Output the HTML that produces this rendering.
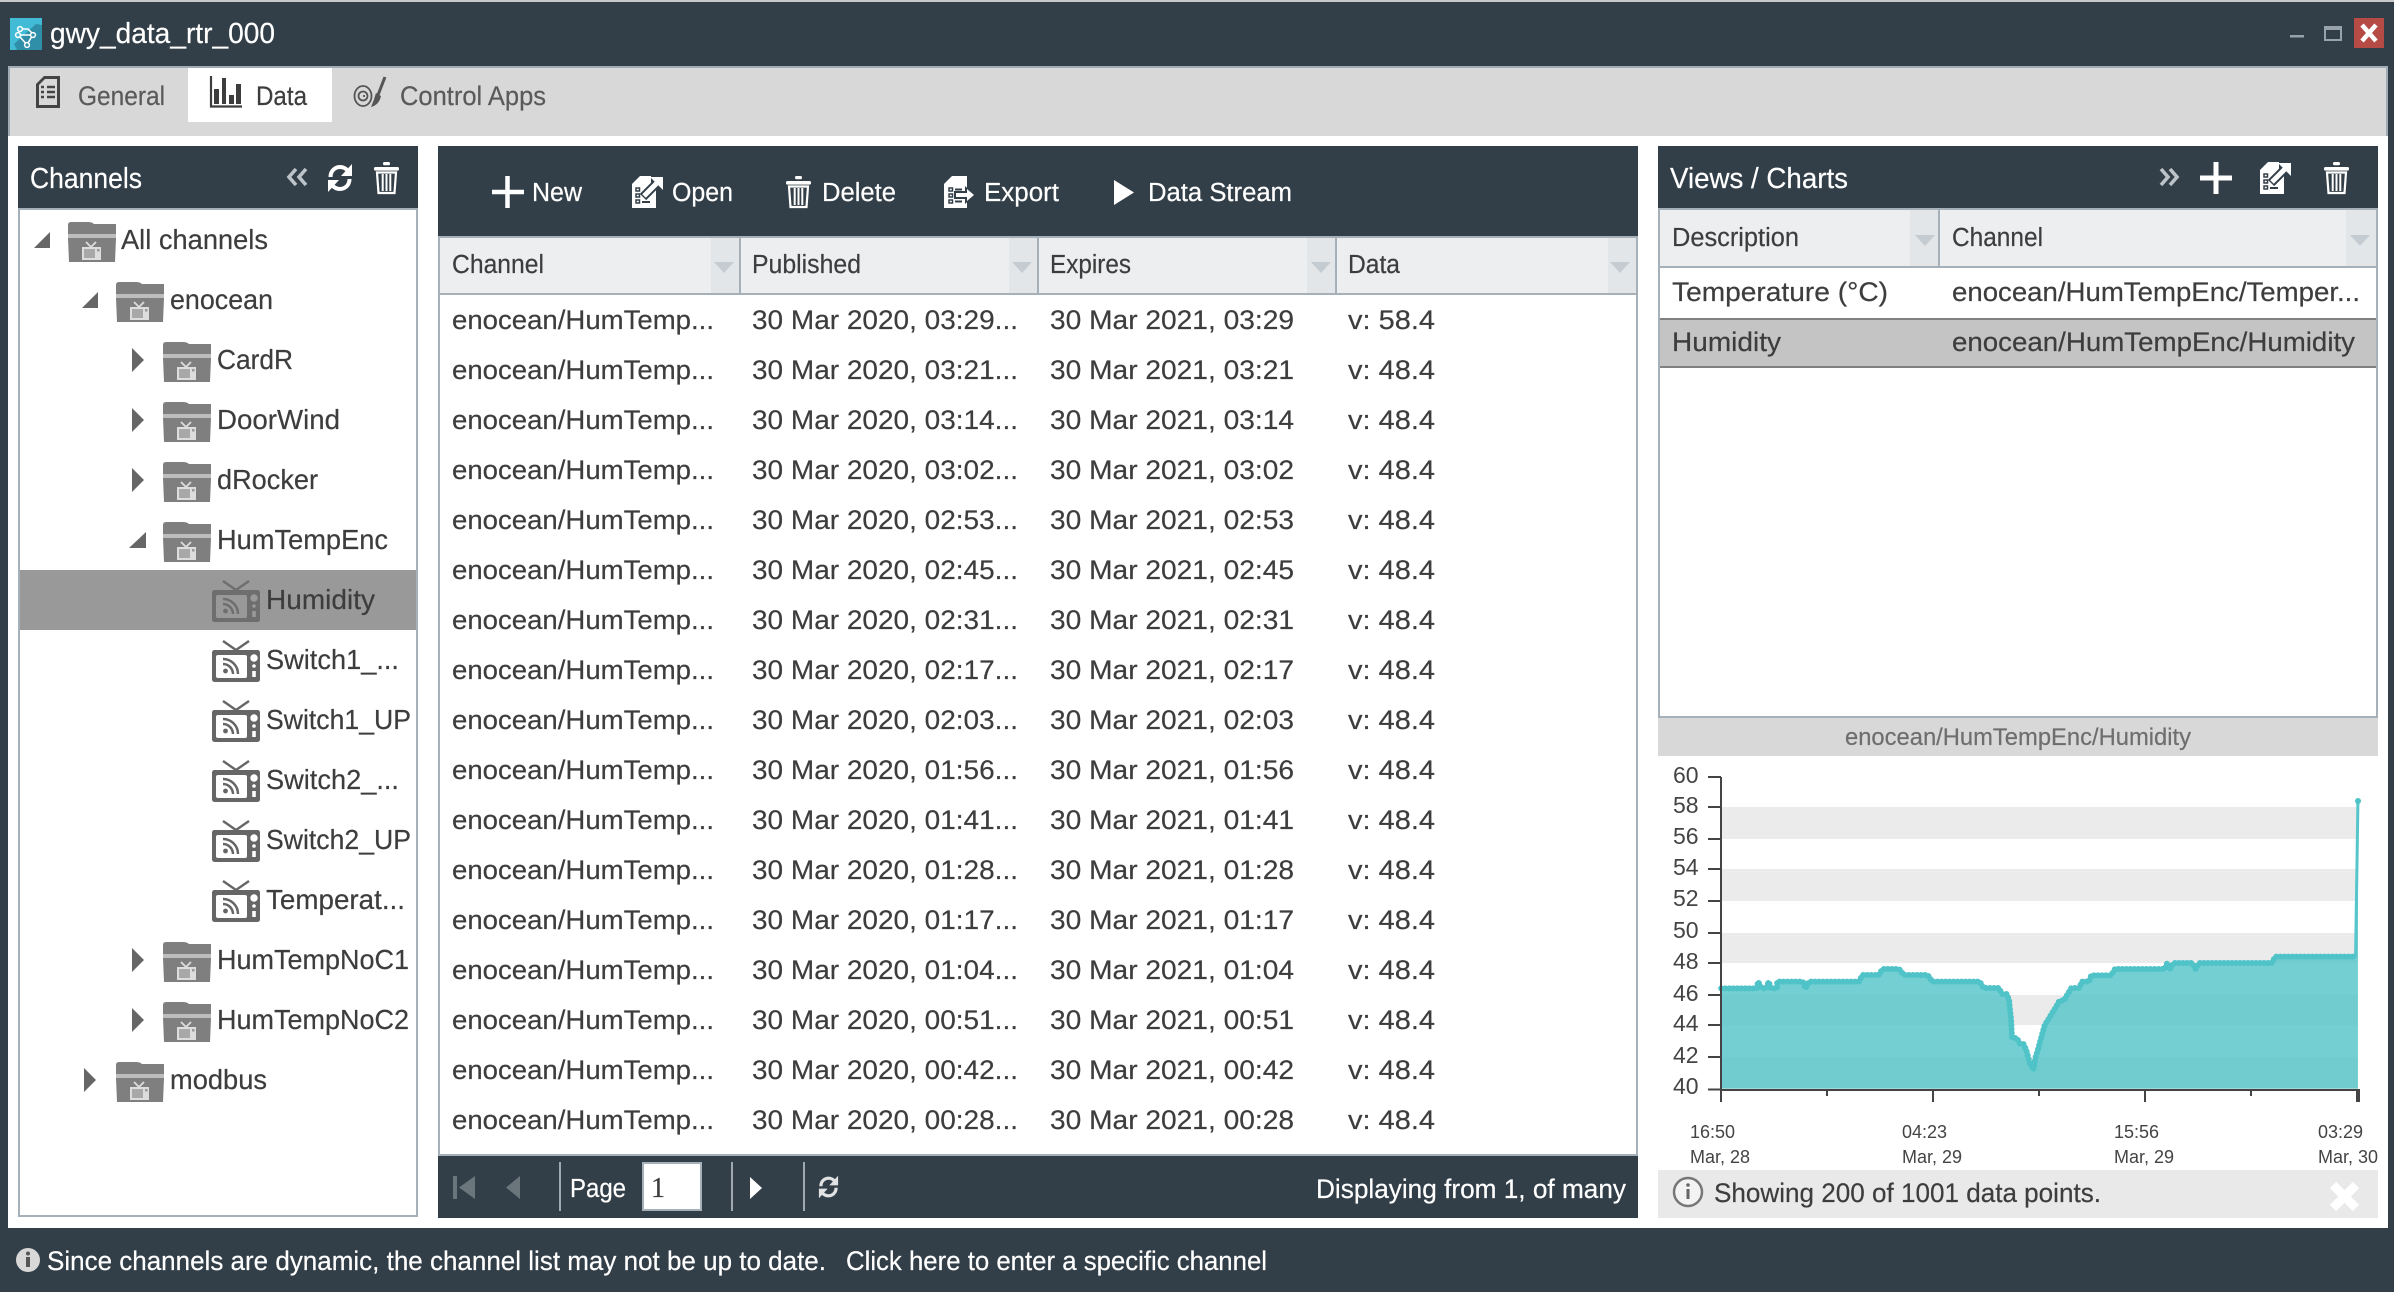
<!DOCTYPE html>
<html lang="en">
<head>
<meta charset="utf-8">
<title>gwy_data_rtr_000</title>
<style>
html,body{margin:0;padding:0;background:#333f48;width:2394px;height:1292px;overflow:hidden}
svg{display:block}
text{font-family:"Liberation Sans",Arial,sans-serif;fill:#3d3d3d;stroke:#3d3d3d;stroke-width:.2px;white-space:pre}
.w{fill:#fff;stroke:#fff}
.r{font-size:26.5px}
.h{font-size:25.5px}
.t{font-size:27.5px}
.hd{font-size:28.5px;fill:#fff;stroke:#fff}
.b{font-size:25.5px;fill:#fff;stroke:#fff}
.tab{font-size:26.5px;fill:#5a5a5a;stroke:#5a5a5a}
.ya{font-size:23px;fill:#444;stroke:none}
.xa{font-size:18px;fill:#444;stroke:none}
.ct{fill:#6e6e6e;stroke:#6e6e6e}
</style>
</head>
<body>
<svg xmlns="http://www.w3.org/2000/svg" width="2394" height="1292" viewBox="0 0 2394 1292">
<defs>
<symbol id="tv" viewBox="0 0 48 42" overflow="visible">
<path d="M11 1 L24 10 L37 1" fill="none" stroke="#666" stroke-width="2.4"/>
<rect x="0" y="10" width="48" height="32" rx="2.5" fill="#666"/>
<rect x="4" y="15" width="31" height="23" rx="2" fill="#fff"/>
<circle cx="42" cy="18" r="3.7" fill="#fff"/><circle cx="42" cy="26" r="1.8" fill="#fff"/>
<rect x="40.2" y="31" width="3.6" height="6" fill="#fff"/>
<circle cx="13.5" cy="31" r="2.4" fill="#666"/>
<path d="M11 24 A10 10 0 0 1 21 34 M11 19 A15 15 0 0 1 26 34" fill="none" stroke="#666" stroke-width="2.5"/>
</symbol>
<symbol id="tvs" viewBox="0 0 48 42" overflow="visible">
<path d="M11 1 L24 10 L37 1" fill="none" stroke="#6e6e6e" stroke-width="2.4"/>
<rect x="0" y="10" width="48" height="32" rx="2.5" fill="#6e6e6e"/>
<rect x="4" y="15" width="31" height="23" rx="2" fill="#999"/>
<circle cx="42" cy="18" r="3.7" fill="#999"/><circle cx="42" cy="26" r="1.8" fill="#999"/>
<rect x="40.2" y="31" width="3.6" height="6" fill="#999"/>
<circle cx="13.5" cy="31" r="2.4" fill="#6e6e6e"/>
<path d="M11 24 A10 10 0 0 1 21 34 M11 19 A15 15 0 0 1 26 34" fill="none" stroke="#6e6e6e" stroke-width="2.5"/>
</symbol>
<symbol id="fold" viewBox="0 0 48 40" overflow="visible">
<path d="M0 12 V3 Q0 0 3 0 H20 Q24 0 26 2 H48 V12 Z" fill="#7f7f7f"/>
<path d="M0 12 H48 V16 H0 Z" fill="#bdbdbd"/>
<path d="M0 16 H48 L47 40 H1 Z" fill="#7f7f7f"/>
<path d="M18 20 L23 25 L28 20" fill="none" stroke="#ddd" stroke-width="1.800"/>
<rect x="14" y="25" width="19" height="13" fill="#ddd"/>
<rect x="16" y="27" width="11" height="9" fill="#a8a8a8"/>
<rect x="29" y="27" width="2.500" height="2.500" fill="#999"/>
</symbol>
<symbol id="trash" viewBox="0 0 25 32" overflow="visible">
<rect x="9" y="0" width="7" height="3.200" rx="1.500" fill="#fff"/>
<rect x="0" y="5" width="25" height="3.600" rx="1.500" fill="#fff"/>
<path d="M3 10.500 H22 L20.500 31 H4.500 Z" fill="none" stroke="#fff" stroke-width="2.200"/>
<path d="M8.700 12 V29 M12.500 12 V29 M16.300 12 V29" stroke="#fff" stroke-width="2"/>
</symbol>
<symbol id="ref" viewBox="0 0 24 30" overflow="visible">
<path d="M2.500 14 C2.500 7 8 4 12 4 C15.500 4 18 5.500 20 8" fill="none" stroke="#fff" stroke-width="4"/>
<path d="M24 1 V13 H13 Z" fill="#fff"/>
<path d="M21.500 16 C21.500 23 16 26 12 26 C8.500 26 6 24.500 4 22" fill="none" stroke="#fff" stroke-width="4"/>
<path d="M0 29 V17 H11 Z" fill="#fff"/>
</symbol>
<symbol id="open" viewBox="0 0 32 32" overflow="visible">
<path d="M0 8 L8 0 H19 V8 H24 V32 H0 Z" fill="#fff"/>
<g fill="none" stroke="#333f48" stroke-width="1.500"><rect x="4" y="12" width="3.500" height="3"/><rect x="4" y="18" width="3.500" height="3"/><rect x="4" y="24" width="3.500" height="3"/></g>
<rect x="10" y="25" width="8" height="2" fill="#333f48"/>
<path d="M11 21 L27 5" stroke="#333f48" stroke-width="9"/>
<path d="M12 20 L26 6" stroke="#fff" stroke-width="5"/>
<path d="M18 1 H31 V14 Z" fill="#fff"/>
</symbol>
<symbol id="export" viewBox="0 0 31 32" overflow="visible">
<path d="M0 8 L8 0 H23 V32 H0 Z" fill="#fff"/>
<g fill="none" stroke="#333f48" stroke-width="1.500"><rect x="5" y="12" width="3.500" height="3"/><rect x="5" y="18" width="3.500" height="3"/><rect x="5" y="24" width="3.500" height="3"/></g>
<path d="M11 13.500 H18 M11 25.500 H18" stroke="#333f48" stroke-width="2"/>
<path d="M10 15 H21 V10 L31 19 L21 28 V23 H10 Z" fill="#333f48"/>
<path d="M12 17 H23 V13 L30 19 L23 25 V21 H12 Z" fill="#fff"/>
</symbol>
</defs>

<!-- window chrome -->
<rect width="2394" height="1292" fill="#333f48"/>
<rect width="2394" height="2" fill="#c9c9c9"/>
<rect x="8" y="136" width="2380" height="1092" fill="#fff"/>
<rect x="8" y="66" width="2380" height="70" fill="#d8d8d8"/>
<path d="M9 136 V67 H2387 V136" fill="none" stroke="#a0acb5" stroke-width="2"/>

<!-- title -->
<rect x="10" y="18" width="32" height="32" fill="#41bbd6"/>
<path d="M42 25 V50 H17 L14 44 L36 24 Z" fill="#2f8fa8"/>
<g fill="none" stroke="#fff" stroke-width="1.500">
<circle cx="20" cy="29" r="2.400"/><circle cx="33" cy="35" r="2.400"/><circle cx="18" cy="35" r="2.400"/><circle cx="27" cy="45" r="2.400"/>
<path d="M22 29 H28 L32 33 M20.500 35 H30.500 M20 37 L25.500 43 M31.500 37 L28 43"/>
</g>
<text x="50" y="43" font-size="29" class="w" textLength="225" lengthAdjust="spacingAndGlyphs">gwy_data_rtr_000</text>

<rect x="2290" y="35" width="14" height="2.500" fill="#97a2aa"/>
<rect x="2325" y="27" width="16" height="13" fill="none" stroke="#97a2aa" stroke-width="2"/><rect x="2324" y="26" width="18" height="4" fill="#97a2aa"/>
<rect x="2354" y="18" width="30" height="30" fill="#b64a45"/>
<path d="M2362 25 L2376 41 M2376 25 L2362 41" stroke="#fff" stroke-width="4.500"/>

<!-- tabs -->
<rect x="188" y="68" width="144" height="54" fill="#fff"/>
<path d="M36 84 L44 76 H60 V108 H36 Z" fill="#444"/>
<path d="M39 85 L45 79 H57 V105 H39 Z" fill="#d8d8d8"/>
<path d="M41 87 H44 M47 87 H55 M41 92 H44 M47 92 H55 M41 97 H44 M47 97 H55" stroke="#444" stroke-width="2.500"/>
<text x="78" y="105" class="tab" textLength="87" lengthAdjust="spacingAndGlyphs">General</text>
<path d="M211 76 V106.500 H242" fill="none" stroke="#3d3d3d" stroke-width="2.200"/>
<rect x="214" y="89" width="5" height="15" fill="#3d3d3d"/><rect x="222" y="78" width="4" height="26" fill="#3d3d3d"/><rect x="229" y="95" width="5" height="9" fill="#3d3d3d"/><rect x="236" y="84" width="5" height="20" fill="#3d3d3d"/>
<text x="256" y="105" font-size="26.500" textLength="51" lengthAdjust="spacingAndGlyphs">Data</text>
<g fill="none" stroke="#555" stroke-width="1.800"><ellipse cx="363" cy="96" rx="8.500" ry="10"/><circle cx="363" cy="96" r="4.500"/><path d="M363 96 h2"/></g>
<path d="M385 77 L378 95" stroke="#555" stroke-width="3"/>
<path d="M376 93 L381 96 Q379 105 371 107 Q374 100 376 93 Z" fill="#555"/>
<text x="400" y="105" class="tab" textLength="146" lengthAdjust="spacingAndGlyphs">Control Apps</text>

<!-- channels panel -->
<rect x="18" y="146" width="400" height="62" fill="#333f48"/>
<rect x="19" y="209" width="398" height="1007" fill="#fff" stroke="#a5b0b8" stroke-width="2"/>
<text x="30" y="188" class="hd" textLength="112" lengthAdjust="spacingAndGlyphs">Channels</text>
<path d="M296 169 L289 177 L296 185 M306 169 L299 177 L306 185" fill="none" stroke="#bcc3c9" stroke-width="3.600"/>
<use href="#ref" x="328" y="163" width="24" height="30"/>
<use href="#trash" x="374" y="162" width="25" height="32"/>

<rect x="20" y="570" width="396" height="60" fill="#999"/>

<!-- tree arrows -->
<g fill="#666">
<path d="M50 232 V248 H34 Z"/>
<path d="M98 292 V308 H82 Z"/>
<path d="M132 348 L144 360 L132 372 Z"/>
<path d="M132 408 L144 420 L132 432 Z"/>
<path d="M132 468 L144 480 L132 492 Z"/>
<path d="M146 532 V548 H129 Z"/>
<path d="M132 948 L144 960 L132 972 Z"/>
<path d="M132 1008 L144 1020 L132 1032 Z"/>
<path d="M84 1068 L96 1080 L84 1092 Z"/>
</g>
<use href="#fold" x="68" y="222" width="48" height="40"/>
<use href="#fold" x="116" y="282" width="48" height="40"/>
<use href="#fold" x="163" y="342" width="48" height="40"/>
<use href="#fold" x="163" y="402" width="48" height="40"/>
<use href="#fold" x="163" y="462" width="48" height="40"/>
<use href="#fold" x="163" y="522" width="48" height="40"/>
<use href="#fold" x="163" y="942" width="48" height="40"/>
<use href="#fold" x="163" y="1002" width="48" height="40"/>
<use href="#fold" x="116" y="1062" width="48" height="40"/>
<use href="#tvs" x="212" y="580" width="48" height="42"/>
<use href="#tv" x="212" y="640" width="48" height="42"/>
<use href="#tv" x="212" y="700" width="48" height="42"/>
<use href="#tv" x="212" y="760" width="48" height="42"/>
<use href="#tv" x="212" y="820" width="48" height="42"/>
<use href="#tv" x="212" y="880" width="48" height="42"/>

<g class="t">
<text class="t" x="121" y="249" textLength="147" lengthAdjust="spacingAndGlyphs">All channels</text>
<text class="t" x="170" y="309" textLength="103" lengthAdjust="spacingAndGlyphs">enocean</text>
<text class="t" x="217" y="369" textLength="76" lengthAdjust="spacingAndGlyphs">CardR</text>
<text class="t" x="217" y="429" textLength="123" lengthAdjust="spacingAndGlyphs">DoorWind</text>
<text class="t" x="217" y="489" textLength="101" lengthAdjust="spacingAndGlyphs">dRocker</text>
<text class="t" x="217" y="549" textLength="171" lengthAdjust="spacingAndGlyphs">HumTempEnc</text>
<text class="t" x="266" y="609" textLength="109" lengthAdjust="spacingAndGlyphs">Humidity</text>
<text class="t" x="266" y="669" textLength="133" lengthAdjust="spacingAndGlyphs">Switch1_...</text>
<text class="t" x="266" y="729" textLength="145" lengthAdjust="spacingAndGlyphs">Switch1_UP</text>
<text class="t" x="266" y="789" textLength="133" lengthAdjust="spacingAndGlyphs">Switch2_...</text>
<text class="t" x="266" y="849" textLength="145" lengthAdjust="spacingAndGlyphs">Switch2_UP</text>
<text class="t" x="266" y="909" textLength="139" lengthAdjust="spacingAndGlyphs">Temperat...</text>
<text class="t" x="217" y="969" textLength="192" lengthAdjust="spacingAndGlyphs">HumTempNoC1</text>
<text class="t" x="217" y="1029" textLength="192" lengthAdjust="spacingAndGlyphs">HumTempNoC2</text>
<text class="t" x="170" y="1089" textLength="97" lengthAdjust="spacingAndGlyphs">modbus</text>
</g>

<!-- center panel -->
<rect x="438" y="146" width="1200" height="90" fill="#333f48"/>
<rect x="438" y="236" width="1200" height="920" fill="#a5b0b8"/>
<rect x="440" y="238" width="1196" height="916" fill="#fff"/>
<rect x="440" y="238" width="1196" height="55" fill="#eceef0"/>
<rect x="440" y="293" width="1196" height="2" fill="#a5b0b8"/>
<rect x="711" y="238" width="28" height="55" fill="#e2e6e9"/><rect x="1009" y="238" width="28" height="55" fill="#e2e6e9"/><rect x="1307" y="238" width="28" height="55" fill="#e2e6e9"/><rect x="1608" y="238" width="28" height="55" fill="#e2e6e9"/>
<rect x="739" y="238" width="2" height="55" fill="#a5b0b8"/><rect x="1037" y="238" width="2" height="55" fill="#a5b0b8"/><rect x="1335" y="238" width="2" height="55" fill="#a5b0b8"/>
<path d="M714 262 H734 L724 273 Z M1012 262 H1032 L1022 273 Z M1311 262 H1331 L1321 273 Z M1610 262 H1630 L1620 273 Z" fill="#c5ccd1"/>

<path d="M507.500 176 V208 M492 192 H524" stroke="#fff" stroke-width="4.500"/>
<text x="532" y="201" class="b" textLength="50" lengthAdjust="spacingAndGlyphs">New</text>
<use href="#open" x="632" y="176" width="32" height="32"/>
<text x="672" y="201" class="b" textLength="61" lengthAdjust="spacingAndGlyphs">Open</text>
<use href="#trash" x="786" y="176" width="25" height="32"/>
<text x="822" y="201" class="b" textLength="74" lengthAdjust="spacingAndGlyphs">Delete</text>
<use href="#export" x="944" y="176" width="31" height="32"/>
<text x="984" y="201" class="b" textLength="75" lengthAdjust="spacingAndGlyphs">Export</text>
<path d="M1114 180 L1134 192.500 L1114 205 Z" fill="#fff"/>
<text x="1148" y="201" class="b" textLength="144" lengthAdjust="spacingAndGlyphs">Data Stream</text>

<text x="452" y="273" class="h" textLength="92" lengthAdjust="spacingAndGlyphs">Channel</text>
<text x="752" y="273" class="h" textLength="109" lengthAdjust="spacingAndGlyphs">Published</text>
<text x="1050" y="273" class="h" textLength="81" lengthAdjust="spacingAndGlyphs">Expires</text>
<text x="1348" y="273" class="h" textLength="52" lengthAdjust="spacingAndGlyphs">Data</text>

<!-- rows -->
<g>
<text class="r" x="452" y="329" textLength="262" lengthAdjust="spacingAndGlyphs">enocean/HumTemp...</text><text class="r" x="752" y="329" textLength="266" lengthAdjust="spacingAndGlyphs">30 Mar 2020, 03:29...</text><text class="r" x="1050" y="329" textLength="244" lengthAdjust="spacingAndGlyphs">30 Mar 2021, 03:29</text><text class="r" x="1348" y="329" textLength="87" lengthAdjust="spacingAndGlyphs">v: 58.4</text>
<text class="r" x="452" y="379" textLength="262" lengthAdjust="spacingAndGlyphs">enocean/HumTemp...</text><text class="r" x="752" y="379" textLength="266" lengthAdjust="spacingAndGlyphs">30 Mar 2020, 03:21...</text><text class="r" x="1050" y="379" textLength="244" lengthAdjust="spacingAndGlyphs">30 Mar 2021, 03:21</text><text class="r" x="1348" y="379" textLength="87" lengthAdjust="spacingAndGlyphs">v: 48.4</text>
<text class="r" x="452" y="429" textLength="262" lengthAdjust="spacingAndGlyphs">enocean/HumTemp...</text><text class="r" x="752" y="429" textLength="266" lengthAdjust="spacingAndGlyphs">30 Mar 2020, 03:14...</text><text class="r" x="1050" y="429" textLength="244" lengthAdjust="spacingAndGlyphs">30 Mar 2021, 03:14</text><text class="r" x="1348" y="429" textLength="87" lengthAdjust="spacingAndGlyphs">v: 48.4</text>
<text class="r" x="452" y="479" textLength="262" lengthAdjust="spacingAndGlyphs">enocean/HumTemp...</text><text class="r" x="752" y="479" textLength="266" lengthAdjust="spacingAndGlyphs">30 Mar 2020, 03:02...</text><text class="r" x="1050" y="479" textLength="244" lengthAdjust="spacingAndGlyphs">30 Mar 2021, 03:02</text><text class="r" x="1348" y="479" textLength="87" lengthAdjust="spacingAndGlyphs">v: 48.4</text>
<text class="r" x="452" y="529" textLength="262" lengthAdjust="spacingAndGlyphs">enocean/HumTemp...</text><text class="r" x="752" y="529" textLength="266" lengthAdjust="spacingAndGlyphs">30 Mar 2020, 02:53...</text><text class="r" x="1050" y="529" textLength="244" lengthAdjust="spacingAndGlyphs">30 Mar 2021, 02:53</text><text class="r" x="1348" y="529" textLength="87" lengthAdjust="spacingAndGlyphs">v: 48.4</text>
<text class="r" x="452" y="579" textLength="262" lengthAdjust="spacingAndGlyphs">enocean/HumTemp...</text><text class="r" x="752" y="579" textLength="266" lengthAdjust="spacingAndGlyphs">30 Mar 2020, 02:45...</text><text class="r" x="1050" y="579" textLength="244" lengthAdjust="spacingAndGlyphs">30 Mar 2021, 02:45</text><text class="r" x="1348" y="579" textLength="87" lengthAdjust="spacingAndGlyphs">v: 48.4</text>
<text class="r" x="452" y="629" textLength="262" lengthAdjust="spacingAndGlyphs">enocean/HumTemp...</text><text class="r" x="752" y="629" textLength="266" lengthAdjust="spacingAndGlyphs">30 Mar 2020, 02:31...</text><text class="r" x="1050" y="629" textLength="244" lengthAdjust="spacingAndGlyphs">30 Mar 2021, 02:31</text><text class="r" x="1348" y="629" textLength="87" lengthAdjust="spacingAndGlyphs">v: 48.4</text>
<text class="r" x="452" y="679" textLength="262" lengthAdjust="spacingAndGlyphs">enocean/HumTemp...</text><text class="r" x="752" y="679" textLength="266" lengthAdjust="spacingAndGlyphs">30 Mar 2020, 02:17...</text><text class="r" x="1050" y="679" textLength="244" lengthAdjust="spacingAndGlyphs">30 Mar 2021, 02:17</text><text class="r" x="1348" y="679" textLength="87" lengthAdjust="spacingAndGlyphs">v: 48.4</text>
<text class="r" x="452" y="729" textLength="262" lengthAdjust="spacingAndGlyphs">enocean/HumTemp...</text><text class="r" x="752" y="729" textLength="266" lengthAdjust="spacingAndGlyphs">30 Mar 2020, 02:03...</text><text class="r" x="1050" y="729" textLength="244" lengthAdjust="spacingAndGlyphs">30 Mar 2021, 02:03</text><text class="r" x="1348" y="729" textLength="87" lengthAdjust="spacingAndGlyphs">v: 48.4</text>
<text class="r" x="452" y="779" textLength="262" lengthAdjust="spacingAndGlyphs">enocean/HumTemp...</text><text class="r" x="752" y="779" textLength="266" lengthAdjust="spacingAndGlyphs">30 Mar 2020, 01:56...</text><text class="r" x="1050" y="779" textLength="244" lengthAdjust="spacingAndGlyphs">30 Mar 2021, 01:56</text><text class="r" x="1348" y="779" textLength="87" lengthAdjust="spacingAndGlyphs">v: 48.4</text>
<text class="r" x="452" y="829" textLength="262" lengthAdjust="spacingAndGlyphs">enocean/HumTemp...</text><text class="r" x="752" y="829" textLength="266" lengthAdjust="spacingAndGlyphs">30 Mar 2020, 01:41...</text><text class="r" x="1050" y="829" textLength="244" lengthAdjust="spacingAndGlyphs">30 Mar 2021, 01:41</text><text class="r" x="1348" y="829" textLength="87" lengthAdjust="spacingAndGlyphs">v: 48.4</text>
<text class="r" x="452" y="879" textLength="262" lengthAdjust="spacingAndGlyphs">enocean/HumTemp...</text><text class="r" x="752" y="879" textLength="266" lengthAdjust="spacingAndGlyphs">30 Mar 2020, 01:28...</text><text class="r" x="1050" y="879" textLength="244" lengthAdjust="spacingAndGlyphs">30 Mar 2021, 01:28</text><text class="r" x="1348" y="879" textLength="87" lengthAdjust="spacingAndGlyphs">v: 48.4</text>
<text class="r" x="452" y="929" textLength="262" lengthAdjust="spacingAndGlyphs">enocean/HumTemp...</text><text class="r" x="752" y="929" textLength="266" lengthAdjust="spacingAndGlyphs">30 Mar 2020, 01:17...</text><text class="r" x="1050" y="929" textLength="244" lengthAdjust="spacingAndGlyphs">30 Mar 2021, 01:17</text><text class="r" x="1348" y="929" textLength="87" lengthAdjust="spacingAndGlyphs">v: 48.4</text>
<text class="r" x="452" y="979" textLength="262" lengthAdjust="spacingAndGlyphs">enocean/HumTemp...</text><text class="r" x="752" y="979" textLength="266" lengthAdjust="spacingAndGlyphs">30 Mar 2020, 01:04...</text><text class="r" x="1050" y="979" textLength="244" lengthAdjust="spacingAndGlyphs">30 Mar 2021, 01:04</text><text class="r" x="1348" y="979" textLength="87" lengthAdjust="spacingAndGlyphs">v: 48.4</text>
<text class="r" x="452" y="1029" textLength="262" lengthAdjust="spacingAndGlyphs">enocean/HumTemp...</text><text class="r" x="752" y="1029" textLength="266" lengthAdjust="spacingAndGlyphs">30 Mar 2020, 00:51...</text><text class="r" x="1050" y="1029" textLength="244" lengthAdjust="spacingAndGlyphs">30 Mar 2021, 00:51</text><text class="r" x="1348" y="1029" textLength="87" lengthAdjust="spacingAndGlyphs">v: 48.4</text>
<text class="r" x="452" y="1079" textLength="262" lengthAdjust="spacingAndGlyphs">enocean/HumTemp...</text><text class="r" x="752" y="1079" textLength="266" lengthAdjust="spacingAndGlyphs">30 Mar 2020, 00:42...</text><text class="r" x="1050" y="1079" textLength="244" lengthAdjust="spacingAndGlyphs">30 Mar 2021, 00:42</text><text class="r" x="1348" y="1079" textLength="87" lengthAdjust="spacingAndGlyphs">v: 48.4</text>
<text class="r" x="452" y="1129" textLength="262" lengthAdjust="spacingAndGlyphs">enocean/HumTemp...</text><text class="r" x="752" y="1129" textLength="266" lengthAdjust="spacingAndGlyphs">30 Mar 2020, 00:28...</text><text class="r" x="1050" y="1129" textLength="244" lengthAdjust="spacingAndGlyphs">30 Mar 2021, 00:28</text><text class="r" x="1348" y="1129" textLength="87" lengthAdjust="spacingAndGlyphs">v: 48.4</text>
</g>

<!-- pager -->
<rect x="438" y="1156" width="1200" height="62" fill="#333f48"/>
<path d="M453 1176 H457 V1199 H453 Z M475 1176 V1199 L459 1187.500 Z M520 1176 V1199 L506 1187.500 Z" fill="#6a757c"/>
<rect x="559" y="1162" width="2" height="49" fill="#a0a9b0"/>
<text x="570" y="1197" class="b" textLength="56" lengthAdjust="spacingAndGlyphs">Page</text>
<rect x="643" y="1163" width="58" height="47" fill="#fff" stroke="#a5b0b8" stroke-width="2"/>
<text x="651" y="1197" font-size="28" style="font-family:'Liberation Serif',serif">1</text>
<rect x="731" y="1162" width="2" height="49" fill="#a0a9b0"/>
<path d="M750 1177 L762 1188 L750 1199 Z" fill="#fff"/>
<rect x="803" y="1162" width="2" height="49" fill="#a0a9b0"/>
<use href="#ref" x="817" y="1175" width="23" height="24" opacity=".85"/>
<text x="1316" y="1198" class="b" textLength="310" lengthAdjust="spacingAndGlyphs" style="font-size:26.500px">Displaying from 1, of many</text>

<!-- views panel -->
<rect x="1658" y="146" width="720" height="62" fill="#333f48"/>
<text x="1670" y="188" class="hd" textLength="178" lengthAdjust="spacingAndGlyphs">Views / Charts</text>
<path d="M2161 169 L2168 177 L2161 185 M2170 169 L2177 177 L2170 185" fill="none" stroke="#bcc3c9" stroke-width="3.600"/>
<path d="M2216 162 V194 M2200 178 H2232" stroke="#fff" stroke-width="5"/>
<use href="#open" x="2260" y="162" width="32" height="32"/>
<use href="#trash" x="2324" y="162" width="25" height="32"/>

<rect x="1659" y="209" width="718" height="508" fill="#fff" stroke="#a5b0b8" stroke-width="2"/>
<rect x="1660" y="210" width="716" height="56" fill="#eceef0"/>
<rect x="1910" y="210" width="28" height="56" fill="#e2e6e9"/><rect x="2346" y="210" width="30" height="56" fill="#e2e6e9"/>
<rect x="1938" y="210" width="2" height="56" fill="#a5b0b8"/>
<rect x="1660" y="266" width="716" height="2" fill="#a5b0b8"/>
<path d="M1915 235 H1935 L1925 246 Z M2350 235 H2370 L2360 246 Z" fill="#c5ccd1"/>
<text x="1672" y="246" class="h" textLength="127" lengthAdjust="spacingAndGlyphs">Description</text>
<text x="1952" y="246" class="h" textLength="91" lengthAdjust="spacingAndGlyphs">Channel</text>
<rect x="1660" y="318" width="716" height="2" fill="#808080"/>
<rect x="1660" y="320" width="716" height="46" fill="#c4c4c4"/>
<rect x="1660" y="366" width="716" height="2" fill="#808080"/>
<text x="1672" y="301" class="r" textLength="216" lengthAdjust="spacingAndGlyphs">Temperature (°C)</text>
<text x="1952" y="301" class="r" textLength="408" lengthAdjust="spacingAndGlyphs">enocean/HumTempEnc/Temper...</text>
<text x="1672" y="351" class="r" textLength="109" lengthAdjust="spacingAndGlyphs">Humidity</text>
<text x="1952" y="351" class="r" textLength="403" lengthAdjust="spacingAndGlyphs">enocean/HumTempEnc/Humidity</text>

<rect x="1658" y="718" width="720" height="38" fill="#d8d8d8"/>
<text x="1845" y="745" font-size="24.500" class="ct" textLength="346" lengthAdjust="spacingAndGlyphs">enocean/HumTempEnc/Humidity</text>

<!-- chart -->
<g fill="#ebebeb">
<rect x="1721" y="807" width="637" height="32"/>
<rect x="1721" y="869" width="637" height="32"/>
<rect x="1721" y="933" width="637" height="30"/>
<rect x="1721" y="995" width="637" height="30"/>
<rect x="1721" y="1057" width="637" height="32"/>
</g>
<svg x="1650" y="710" width="744" height="410" viewBox="0 0 1568 1230" preserveAspectRatio="none" overflow="visible">
<path d="M150 835 H225 L228 815 L235 835 H245 L250 815 L255 835 H268 V815 H322 L328 835 L335 815 H440 L448 795 H482 L490 777 H525 L535 795 H585 L595 815 H695 L703 834 H735 L742 852 H752 L757 872 L758 890 L761 928 L763 984 H773 L780 1002 H787 L793 1020 L800 1058 L808 1078 L813 1040 L817 1022 L824 985 L832 945 L840 927 L848 908 L856 890 L863 872 H872 L880 853 L888 834 H905 L910 815 H925 L930 796 H972 L980 777 H1085 L1090 759 L1096 777 L1103 759 H1143 L1150 777 L1157 759 H1310 L1318 740 H1487 L1492 272 V1136 H150 Z" fill="#55c4c8" fill-opacity=".82"/>
<path d="M150 835 H225 L228 815 L235 835 H245 L250 815 L255 835 H268 V815 H322 L328 835 L335 815 H440 L448 795 H482 L490 777 H525 L535 795 H585 L595 815 H695 L703 834 H735 L742 852 H752 L757 872 L758 890 L761 928 L763 984 H773 L780 1002 H787 L793 1020 L800 1058 L808 1078 L813 1040 L817 1022 L824 985 L832 945 L840 927 L848 908 L856 890 L863 872 H872 L880 853 L888 834 H905 L910 815 H925 L930 796 H972 L980 777 H1085 L1090 759 L1096 777 L1103 759 H1143 L1150 777 L1157 759 H1310 L1318 740 H1487 L1492 272" fill="none" stroke="#55c6cb" stroke-width="3" stroke-linejoin="round" vector-effect="non-scaling-stroke"/>
<path d="M150 835 H225 L228 815 L235 835 H245 L250 815 L255 835 H268 V815 H322 L328 835 L335 815 H440 L448 795 H482 L490 777 H525 L535 795 H585 L595 815 H695 L703 834 H735 L742 852 H752 L757 872 L758 890 L761 928 L763 984 H773 L780 1002 H787 L793 1020 L800 1058 L808 1078 L813 1040 L817 1022 L824 985 L832 945 L840 927 L848 908 L856 890 L863 872 H872 L880 853 L888 834 H905 L910 815 H925 L930 796 H972 L980 777 H1085 L1090 759 L1096 777 L1103 759 H1143 L1150 777 L1157 759 H1310 L1318 740 H1487" fill="none" stroke="#4fc3c8" stroke-width="6" stroke-linecap="round" stroke-dasharray="0.100 3.900" vector-effect="non-scaling-stroke"/>
</svg>
<circle cx="2358" cy="801" r="3" fill="#4fc3c8"/>
<path d="M1721 777 V1090 H2358 M1708 777 H1721 M1708 807 H1721 M1708 839 H1721 M1708 869 H1721 M1708 901 H1721 M1708 933 H1721 M1708 963 H1721 M1708 995 H1721 M1708 1025 H1721 M1708 1057 H1721 M1708 1089.500 H1721 M1721 1090 V1102 M1933 1090 V1102 M2145 1090 V1102 M1827 1090 V1096 M2039 1090 V1096 M2251 1090 V1096" fill="none" stroke="#444" stroke-width="2"/>
<rect x="2356" y="1089" width="4" height="13" fill="#444"/>
<g class="ya" text-anchor="start">
<text class="ya" x="1673" y="783">60</text><text class="ya" x="1673" y="813">58</text><text class="ya" x="1673" y="844">56</text><text class="ya" x="1673" y="875">54</text><text class="ya" x="1673" y="906">52</text><text class="ya" x="1673" y="938">50</text><text class="ya" x="1673" y="969">48</text><text class="ya" x="1673" y="1001">46</text><text class="ya" x="1673" y="1031">44</text><text class="ya" x="1673" y="1063">42</text><text class="ya" x="1673" y="1094">40</text>
</g>
<text class="xa" x="1690" y="1138">16:50</text><text class="xa" x="1690" y="1163">Mar, 28</text>
<text class="xa" x="1902" y="1138">04:23</text><text class="xa" x="1902" y="1163">Mar, 29</text>
<text class="xa" x="2114" y="1138">15:56</text><text class="xa" x="2114" y="1163">Mar, 29</text>
<text class="xa" x="2318" y="1138">03:29</text><text class="xa" x="2318" y="1163">Mar, 30</text>

<!-- info bar -->
<rect x="1658" y="1170" width="720" height="48" fill="#e9e9e9"/>
<circle cx="1688" cy="1192" r="14" fill="#f3f3f3" stroke="#777" stroke-width="2.500"/>
<circle cx="1688" cy="1185" r="1.800" fill="#666"/><rect x="1686.500" y="1189" width="3" height="10" fill="#666"/>
<text x="1714" y="1202" class="r" textLength="387" lengthAdjust="spacingAndGlyphs">Showing 200 of 1001 data points.</text>
<path d="M2333 1185 L2356 1208 M2356 1185 L2333 1208" stroke="#fff" stroke-width="9"/>

<!-- status bar -->
<circle cx="28" cy="1260" r="12" fill="#d8d8d8"/>
<circle cx="28" cy="1253.500" r="2" fill="#555"/><rect x="26" y="1257" width="4" height="10" fill="#555"/>
<text x="47" y="1270" class="b" textLength="779" lengthAdjust="spacingAndGlyphs" style="font-size:26.500px">Since channels are dynamic, the channel list may not be up to date.</text>
<text x="846" y="1270" class="b" textLength="421" lengthAdjust="spacingAndGlyphs" style="font-size:26.500px">Click here to enter a specific channel</text>
</svg>
</body>
</html>
